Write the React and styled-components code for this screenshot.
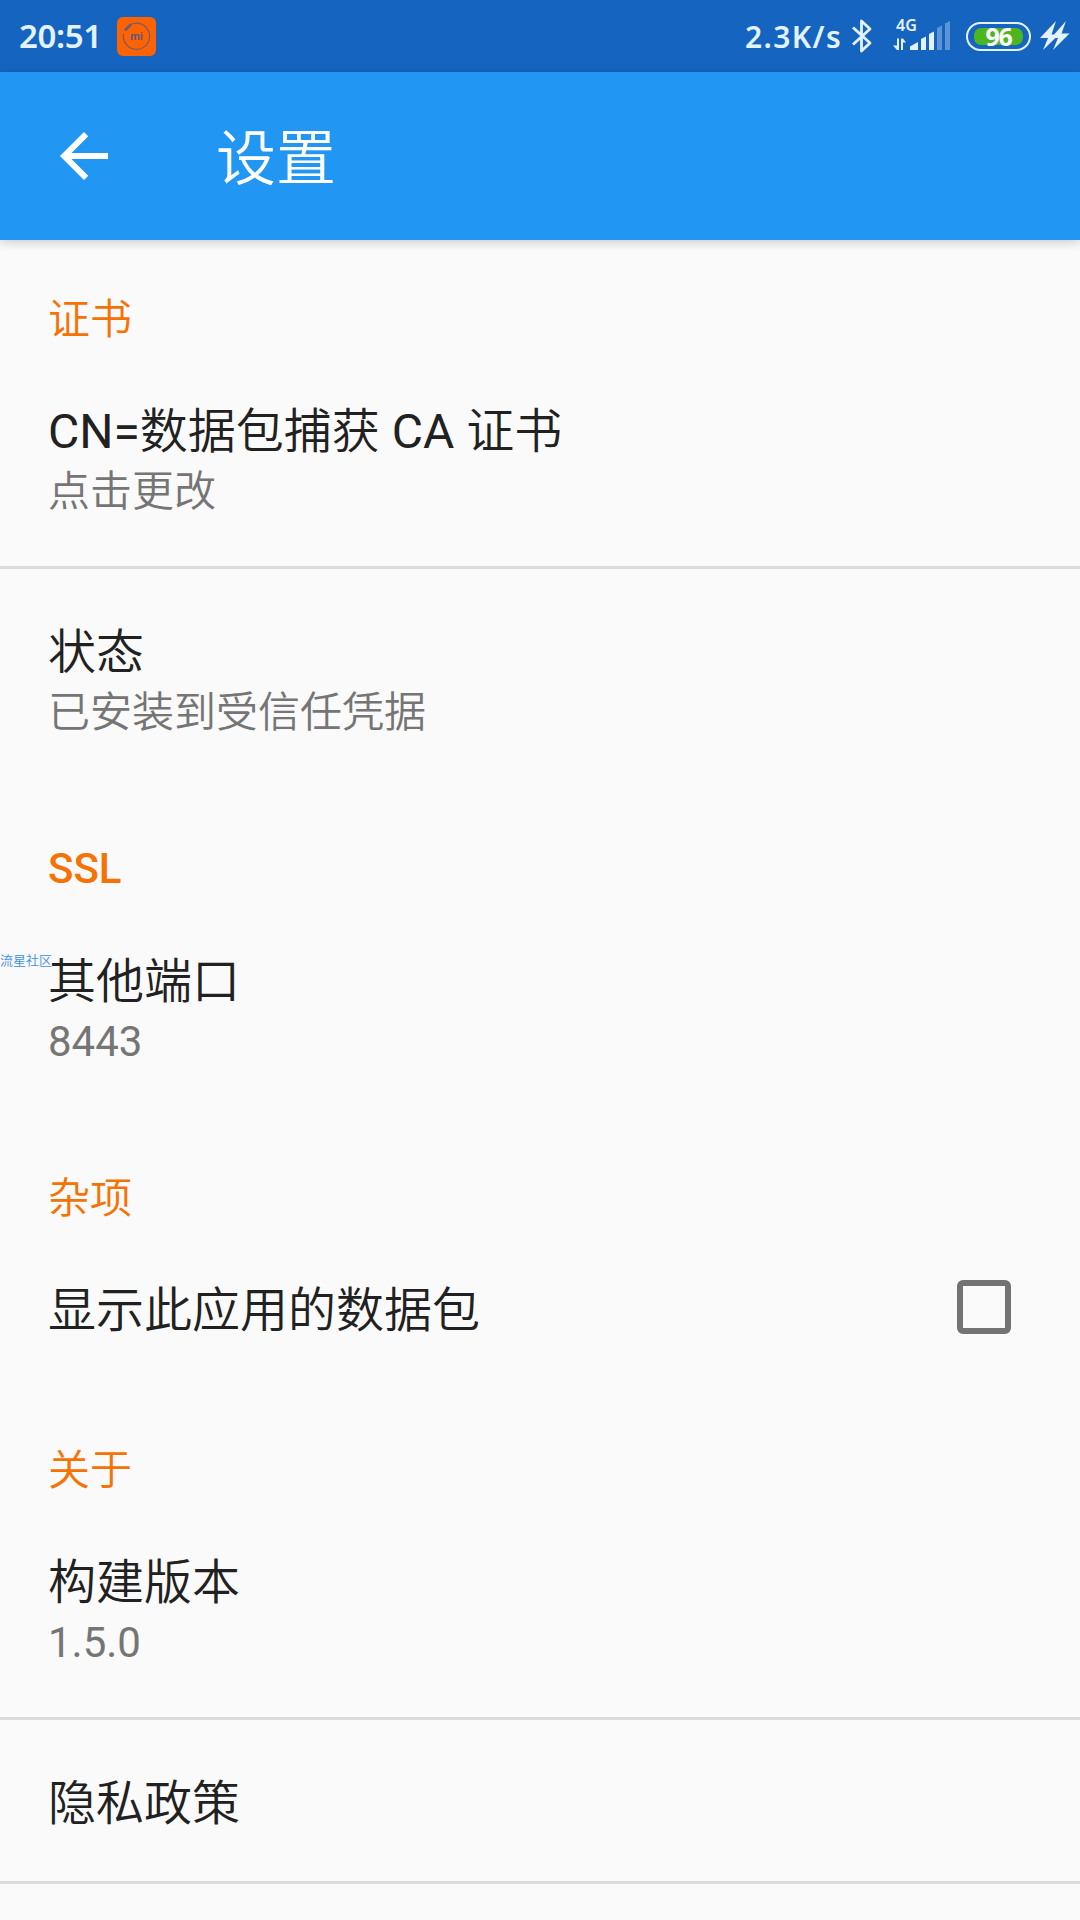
import * as React from 'react';
import styled, { createGlobalStyle, css } from 'styled-components';

const GlobalStyle = createGlobalStyle`
    * {
        box-sizing: border-box;
    }
    body {
        margin: 0;
        background: #fafafa;
        font-family: Roboto, 'Noto Sans CJK SC', sans-serif;
    }
`;

// whole phone screen
const Screen = styled.div`
    position: relative;
    display: flex;
    flex-direction: column;
    width: 1080px;
    height: 1920px;
    overflow: hidden;
    background: #fafafa;
`;

// system status bar
const StatusBar = styled.header`
    display: flex;
    align-items: center;
    flex: none;
    height: 72px;
    padding: 0 10px 0 19px;
    background: #1565c0;
    color: #e3f2fd;
    font-family: 'Noto Sans', sans-serif;
`;

const Clock = styled.span`
    width: 98px;
    font-size: 33px;
    font-weight: 600;
    line-height: 74px;
    letter-spacing: -0.4px;
    white-space: nowrap;
`;

const Speed = styled.span`
    margin-left: auto;
    width: 106px;
    font-size: 30px;
    font-weight: 600;
    line-height: 73px;
    letter-spacing: 1.4px;
    white-space: nowrap;
`;

const StatusIcon = styled.svg`
    flex: none;
    display: block;
    margin-left: ${(props) => props.$gap || 0}px;
`;

const Mobile = styled.div`
    display: flex;
    flex-direction: column;
    flex: none;
    width: 58px;
    height: 36px;
    margin-left: 20px;
`;

const Network = styled.span`
    padding-left: 3px;
    height: 12px;
    margin-bottom: -10px;
    font-size: 16px;
    font-weight: 600;
    line-height: 15px;
`;

const Battery = styled.div`
    flex: none;
    width: 65px;
    height: 29px;
    margin-left: 15px;
    padding: 4px;
    border: 2px solid #e3f2fd;
    border-radius: 15px;
`;

const BatteryLevel = styled.div`
    height: 17px;
    margin: 0 2px;
    border-radius: 7px;
    background: #4cb520;
    color: #fff;
    font-size: 25px;
    font-weight: 700;
    letter-spacing: -1.2px;
    line-height: 16px;
    text-align: center;
`;

// app toolbar
const Toolbar = styled.div`
    position: relative;
    display: flex;
    align-items: center;
    flex: none;
    height: 168px;
    padding-left: 48px;
    background: #2196f3;
    box-shadow: 0 2px 10px rgba(0, 0, 0, 0.2);
    color: #fff;
`;

const ToolbarTitle = styled.h1`
    margin: 8px 0 0 96px;
    font-size: 60px;
    font-weight: 350;
    line-height: 80px;
`;

// settings list
const Category = styled.h2`
    display: flex;
    align-items: flex-end;
    flex: none;
    height: ${(props) => (props.$first ? 108 : 111)}px;
    margin: 0;
    padding: 0 48px ${(props) => (props.$latin ? 1 : 0)}px;
    color: #f57205;
    font-size: 42px;
    font-weight: ${(props) => (props.$latin ? 500 : 350)};
    line-height: 56px;
`;

const Item = styled.div`
    display: flex;
    align-items: center;
    justify-content: space-between;
    flex: none;
    padding: 48px 69px 48px 48px;
    ${(props) =>
        props.$divider &&
        css`
            border-bottom: 3px solid #dcdcdc;
        `}
`;

const ItemTitle = styled.div`
    height: 65px;
    color: #212121;
    font-size: 48px;
    line-height: 71px;
    white-space: pre;
`;

const ItemSummary = styled.div`
    height: 57px;
    color: #757575;
    font-size: 42px;
    line-height: 62px;
`;

// thin strokes for the Chinese text
const Han = styled.span`
    font-weight: 350;
`;

const Latin = styled.span`
    font-weight: 375;
`;

const Checkbox = styled.div`
    width: 54px;
    height: 54px;
    margin-bottom: 1px;
    border: 6px solid #737373;
    border-radius: 6px;
`;

const Watermark = styled.div`
    position: absolute;
    top: 951px;
    left: 0;
    color: #3d8fe8;
    font-size: 13px;
    font-weight: 350;
    line-height: 20px;
`;

// settings shown on the page
const groups = [
    {
        key: 'certificate',
        title: '证书',
        items: [
            {
                key: 'ca',
                title: 'CN=数据包捕获 CA 证书',
                summary: '点击更改',
                divider: true,
            },
            { key: 'state', title: '状态', summary: '已安装到受信任凭据' },
        ],
    },
    {
        key: 'ssl',
        title: 'SSL',
        latin: true,
        items: [{ key: 'ports', title: '其他端口', summary: '8443' }],
    },
    {
        key: 'misc',
        title: '杂项',
        items: [{ key: 'own', title: '显示此应用的数据包', checkbox: true }],
    },
    {
        key: 'about',
        title: '关于',
        items: [
            {
                key: 'build',
                title: '构建版本',
                summary: '1.5.0',
                divider: true,
            },
            { key: 'privacy', title: '隐私政策', divider: true },
        ],
    },
];

// splits a label into its Chinese and latin parts
const Label = ({ text }) =>
    text
        .split(/([\u4e00-\u9fff]+)/)
        .map((part, index) =>
            index % 2 ? (
                <Han key={index}>{part}</Han>
            ) : (
                <Latin key={index}>{part}</Latin>
            )
        );

const MiIcon = () => (
    <StatusIcon width="39" height="39" viewBox="0 0 39 39">
        <rect width="39" height="39" rx="6" fill="#ff6200" />
        <g fill="none" stroke="#6a5f78">
            <path
                d="M13.5 7.6A13.1 13.1 0 1 1 6.6 17"
                strokeWidth="1.2"
            />
            <path d="M8.8 12.5L13 8.3" strokeWidth="3" strokeLinecap="round" />
        </g>
        <text
            x="19.5"
            y="23"
            fill="#5a5a80"
            fontFamily="Liberation Sans, sans-serif"
            fontSize="11"
            fontWeight="700"
            textAnchor="middle"
        >
            mi
        </text>
    </StatusIcon>
);

const BluetoothIcon = () => (
    <StatusIcon width="22" height="36" viewBox="0 0 22 36">
        <path
            d="M2 9.5L19 25L10.5 33V3L19 11L2 26.5"
            fill="none"
            stroke="#e3f2fd"
            strokeWidth="2.8"
            strokeLinejoin="round"
        />
    </StatusIcon>
);

const SignalIcon = () => (
    <StatusIcon width="58" height="32" viewBox="0 0 58 32">
        <g fill="#e3f2fd">
            <path d="M4 18.5H6V30H4L0 25.5H4ZM8 30V18.5H10L13 22.5H10V30Z" />
            <path d="M17 30V26.5L25 22V30ZM28 30V19L33 16.5V30ZM36 30V14L41 11.5V30Z" />
            <path
                d="M44 30V8L49 5.5V30ZM52 30V3.5L57 1V30Z"
                opacity="0.35"
            />
        </g>
    </StatusIcon>
);

const ChargeIcon = () => (
    <StatusIcon $gap={9} width="30" height="32" viewBox="0 0 30 32">
        <path
            d="M16 1L0 18H8L3 30L19 14.5H11.5ZM26 1L11 18H18L13 30L29.5 13.5H21.5Z"
            fill="#e3f2fd"
        />
    </StatusIcon>
);

const BackIcon = () => (
    <svg width="72" height="72" viewBox="0 0 24 24" fill="#fff">
        <path d="M20 11H7.83l5.59-5.59L12 4l-8 8 8 8 1.41-1.41L7.83 13H20v-2z" />
    </svg>
);

const App = () => (
    <Screen>
        <GlobalStyle />
        <StatusBar>
            <Clock>20:51</Clock>
            <MiIcon />
            <Speed>2.3K/s</Speed>
            <BluetoothIcon />
            <Mobile>
                <Network>4G</Network>
                <SignalIcon />
            </Mobile>
            <Battery>
                <BatteryLevel>96</BatteryLevel>
            </Battery>
            <ChargeIcon />
        </StatusBar>
        <Toolbar>
            <BackIcon />
            <ToolbarTitle>设置</ToolbarTitle>
        </Toolbar>
        {groups.map((group, index) => (
            <React.Fragment key={group.key}>
                <Category $first={index === 0} $latin={group.latin}>
                    {group.title}
                </Category>
                {group.items.map((item) => (
                    <Item key={item.key} $divider={item.divider}>
                        <div>
                            <ItemTitle>
                                <Label text={item.title} />
                            </ItemTitle>
                            {item.summary && (
                                <ItemSummary>
                                    <Label text={item.summary} />
                                </ItemSummary>
                            )}
                        </div>
                        {item.checkbox && <Checkbox />}
                    </Item>
                ))}
            </React.Fragment>
        ))}
        <Watermark>流星社区</Watermark>
    </Screen>
);

export default App;
